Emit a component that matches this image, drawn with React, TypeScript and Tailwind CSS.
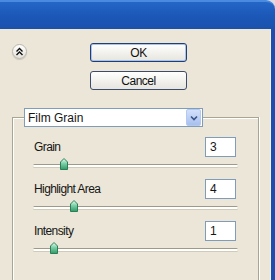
import React from 'react';

const params = [
  { label: 'Grain', value: 3, max: 20 },
  { label: 'Highlight Area', value: 4, max: 20 },
  { label: 'Intensity', value: 1, max: 10 },
];

function CollapseIcon() {
  return (
    <div className="flex h-[15px] w-[15px] items-center justify-center rounded-full border border-[#B9B6AC] bg-gradient-to-b from-white to-[#E4E2DA] shadow-[0_1px_1px_rgba(0,0,0,0.15)]">
      <svg width="9" height="9" viewBox="0 0 9 9" fill="none" stroke="#111" strokeWidth="1.4">
        <path d="M1.5 4.5 L4.5 1.5 L7.5 4.5" />
        <path d="M1.5 8 L4.5 5 L7.5 8" />
      </svg>
    </div>
  );
}

function Thumb({ left }: { left: string }) {
  return (
    <svg
      className="absolute top-0"
      style={{ left }}
      width="8"
      height="12"
      viewBox="0 0 8 12"
    >
      <defs>
        <linearGradient id="tg" x1="0" y1="0" x2="0" y2="1">
          <stop offset="0" stopColor="#E9FFF3" />
          <stop offset="0.45" stopColor="#7FD0A8" />
          <stop offset="1" stopColor="#2F9A68" />
        </linearGradient>
      </defs>
      <path d="M4 0.5 L7.5 4 L7.5 11.5 L0.5 11.5 L0.5 4 Z" fill="url(#tg)" stroke="#2A7F58" strokeWidth="1" />
    </svg>
  );
}

function XpButton({ label, isDefault }: { label: string; isDefault?: boolean }) {
  return (
    <div
      className={
        isDefault
          ? 'flex h-[19px] w-[97px] items-center justify-center rounded-[3px] border border-[#1F3E72] bg-gradient-to-b from-white to-[#E6E5DE] text-[12px] tracking-[-0.5px] text-[#111] shadow-[inset_0_0_0_1px_#A9C1EC]'
          : 'flex h-[19px] w-[97px] items-center justify-center rounded-[3px] border border-[#3C4C6C] bg-gradient-to-b from-white to-[#E6E5DE] text-[12px] tracking-[-0.5px] text-[#111]'
      }
    >
      {label}
    </div>
  );
}

export default function App() {
  return (
    <div
      className="flex h-[280px] w-[275px] flex-col overflow-hidden bg-[#DCDDE2] text-[#151515]"
      style={{ fontFamily: '"Liberation Sans", Arial, sans-serif' }}
    >
      <div className="h-[29px] rounded-tr-[9px] border-t-2 border-[#4A8AE0] bg-gradient-to-b from-[#2466C6] via-[#1C58B8] to-[#1A51AD]" />
      <div className="flex flex-1">
        <div className="flex flex-1 flex-col bg-[#EBE6D7] pt-[14px]">
          <div className="flex items-start pl-[12px]">
            <div className="mt-[1px]">
              <CollapseIcon />
            </div>
            <div className="ml-[63px] flex flex-col gap-[9px]">
              <XpButton label="OK" isDefault />
              <XpButton label="Cancel" />
            </div>
          </div>

          <fieldset className="ml-[12px] mr-[12px] mt-[18px] flex-1 border border-b-0 border-[#A9A593] pl-[11px] shadow-[inset_1px_1px_0_white,1px_0_0_white]">
            <legend className="p-0">
              <div className="flex h-[19px] w-[179px] items-center border border-[#7F9DB9] bg-white pl-[3px] text-[12px]">
                <span className="flex-1">Film Grain</span>
                <div className="mr-[1px] flex h-[17px] w-[15px] items-center justify-center rounded-[2px] border border-[#B5C8F0] bg-gradient-to-b from-[#D3E0FB] to-[#A8C0EF]">
                  <svg width="8" height="6" viewBox="0 0 8 6" fill="none" stroke="#3A5486" strokeWidth="1.6">
                    <path d="M1 1.5 L4 4.5 L7 1.5" />
                  </svg>
                </div>
              </div>
            </legend>
            <div className="flex flex-col pl-[9px] pr-[20px] pt-[10px]">
              {params.map((p) => (
                <div key={p.label} className="mb-[9px]">
                  <div className="flex h-[20px] items-center justify-between">
                    <span className="ml-[1px] text-[12px] tracking-[-0.6px]">{p.label}</span>
                    <div className="mr-[2px] flex h-[20px] w-[31px] items-center border border-[#7F9DB9] bg-white pl-[4px] text-[12px]">
                      {p.value}
                    </div>
                  </div>
                  <div className="relative mt-[1px] h-[12px]">
                    <div className="absolute left-0 right-0 top-[6px] h-[3px] rounded-full border-t border-[#9E9A8A] bg-white shadow-[0_1px_0_#CFCABA]" />
                    <Thumb left={`calc(${(p.value / p.max) * 100}% - 4px)`} />
                  </div>
                </div>
              ))}
            </div>
          </fieldset>
        </div>
        <div className="w-[4px] bg-[#1F4FAE] shadow-[-1px_0_0_#F4F1E8]" />
      </div>
    </div>
  );
}
